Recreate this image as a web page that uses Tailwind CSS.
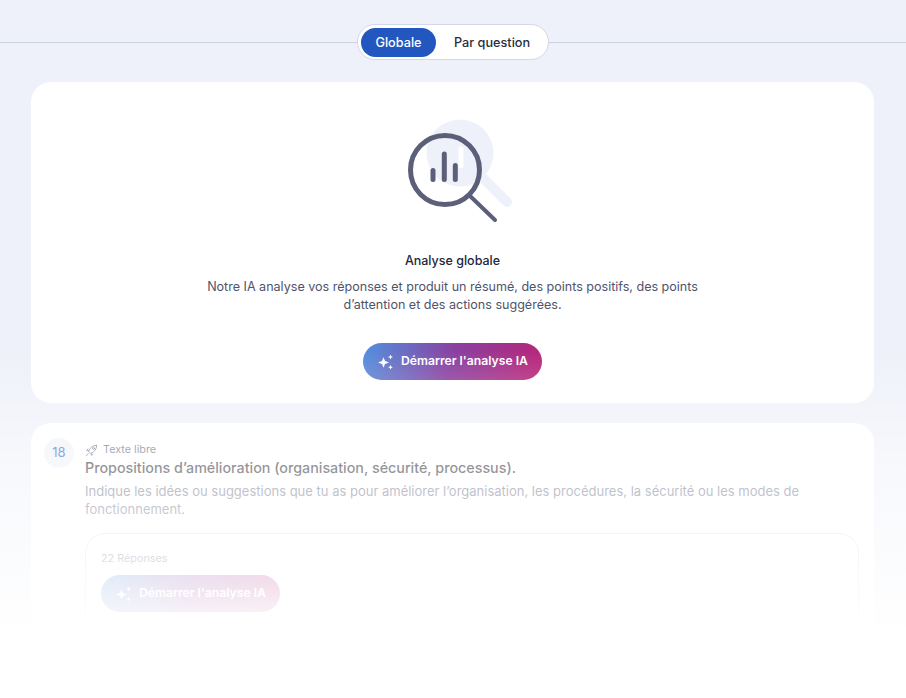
<!DOCTYPE html>
<html lang="fr">
<head>
    <meta charset="UTF-8">
    <meta name="viewport" content="width=device-width, initial-scale=1.0">
    <title>Analyse</title>
    <script src="https://cdn.jsdelivr.net/npm/@tailwindcss/browser@4"></script>
</head>
<body class="bg-[#eef1f9] font-['Inter',sans-serif] h-[698px] overflow-hidden relative">

    <!-- Onglets -->
    <div class="flex items-center pt-6">
        <div class="flex-1 h-px bg-[#ccd2e3]"></div>
        <div class="flex items-center gap-[18px] h-9 w-[192px] pl-[3px] bg-white border border-[#d3d8e8] rounded-full text-[12.7px] font-medium">
            <div class="h-[29px] w-[75px] flex items-center justify-center rounded-full bg-[#2257bf] text-white pt-px">Globale</div>
            <div class="text-[#2a2d3e] pt-px">Par question</div>
        </div>
        <div class="flex-1 h-px bg-[#ccd2e3]"></div>
    </div>

    <div class="px-[31px] pr-[32px] pt-[22px] flex flex-col gap-5">
        <!-- Analyse globale -->
        <div class="bg-white rounded-[20px] h-[321px] flex flex-col items-center">
            <svg class="mt-[34px] shrink-0" width="120" height="110" viewBox="0 0 120 110" fill="none" stroke-linecap="round">
                <circle cx="67" cy="37" r="33.5" fill="#eef1f9"/>
                <path d="M90 62 L114 86" stroke="#eef1f9" stroke-width="10"/>
                <path d="M68 33V50" stroke="#ffffff" stroke-width="5"/>
                <circle cx="52" cy="54" r="34.5" stroke="#5c5f7a" stroke-width="5"/>
                <path d="M76 79 L102 104" stroke="#5c5f7a" stroke-width="4"/>
                <path d="M40 54.5V63.5M51.3 38V63.5M62.3 49.5V63.5" stroke="#5c5f7a" stroke-width="5"/>
            </svg>
            <h2 class="mt-[25px] text-[12.5px] leading-5 font-medium text-[#23263a]">Analyse globale</h2>
            <p class="mt-[7px] w-[520px] text-center text-[12.55px] leading-[18px] text-[#50536c]">Notre IA analyse vos réponses et produit un résumé, des points positifs, des points d’attention et des actions suggérées.</p>
            <button class="mt-[29px] h-[37px] w-[179px] rounded-full flex items-center pl-[15px] gap-[7px] bg-linear-[110deg] from-[#5092e0] via-[#8a3f9f] to-[#bb2377] text-white text-[12.2px] font-semibold">
                <svg width="16" height="16" viewBox="0 0 16 16" fill="white"><path d="M5.5 3.2 L7 7 L11 8.5 L7 10 L5.5 13.8 L4 10 L0 8.5 L4 7Z"/><path d="M12.5 0.5 L13.2 2.3 L15 3 L13.2 3.7 L12.5 5.5 L11.8 3.7 L10 3 L11.8 2.3Z"/><path d="M12.5 11 L13.2 12.6 L14.8 13.3 L13.2 14 L12.5 15.6 L11.8 14 L10.2 13.3 L11.8 12.6Z"/></svg>
                Démarrer l'analyse IA
            </button>
        </div>

        <!-- Question 18 -->
        <div class="bg-white rounded-[20px] h-[240px] pl-[13px] pr-[15px] pt-[15px] flex gap-[11px]">
            <div class="w-[30px] h-[30px] shrink-0 rounded-full bg-[#eef1f9] text-[#2257bf] text-[13px] flex items-center justify-center">18</div>
            <div class="flex-1 min-w-0">
                <div class="flex items-center gap-[5px] text-[10.8px] leading-[16px] text-[#5c5f7a] pt-[4px]">
                    <svg width="13" height="13" viewBox="0 0 16 16" fill="none" stroke="#5c5f7a" stroke-width="1.1" stroke-linecap="round" stroke-linejoin="round"><path d="M4.5 8.5 C6 4.5 10 1.8 14.5 1.5 C14.2 6 11.5 10 7.5 11.5 Z"/><circle cx="10.5" cy="5.5" r="1.2"/><path d="M4.5 8.5 L2 8 L3.5 6M7.5 11.5 L8 14 L10 12.5M4 12 L1.5 14.5"/></svg>
                    Texte libre
                </div>
                <h3 class="-mt-px text-[14.3px] leading-[22px] font-medium text-[#0e1020]">Propositions d’amélioration (organisation, sécurité, processus).</h3>
                <p class="mt-[3px] text-[13px] leading-[18px] text-[#5c5f7a]">Indique les idées ou suggestions que tu as pour améliorer l’organisation, les procédures, la sécurité ou les modes de fonctionnement.</p>
                <div class="mt-[15px] h-[140px] border border-[#d3d8e8] rounded-[20px] px-[15px] pt-[17px]">
                    <div class="text-[10.8px] leading-4 text-[#5c5f7a]">22 Réponses</div>
                    <button class="mt-[8px] h-[37px] w-[179px] rounded-full flex items-center pl-[15px] gap-[7px] bg-linear-[110deg] from-[#5092e0] via-[#8a3f9f] to-[#bb2377] text-white text-[12.2px] font-semibold">
                        <svg width="16" height="16" viewBox="0 0 16 16" fill="white"><path d="M5.5 3.2 L7 7 L11 8.5 L7 10 L5.5 13.8 L4 10 L0 8.5 L4 7Z"/><path d="M12.5 0.5 L13.2 2.3 L15 3 L13.2 3.7 L12.5 5.5 L11.8 3.7 L10 3 L11.8 2.3Z"/><path d="M12.5 11 L13.2 12.6 L14.8 13.3 L13.2 14 L12.5 15.6 L11.8 14 L10.2 13.3 L11.8 12.6Z"/></svg>
                        Démarrer l'analyse IA
                    </button>
                </div>
            </div>
        </div>
    </div>

    <!-- Fondu vers le blanc -->
    <div class="absolute left-0 right-0 top-[350px] bottom-0 bg-linear-to-b from-white/0 from-0% via-white/55 via-34% to-white to-[83%] pointer-events-none"></div>
</body>
</html>
